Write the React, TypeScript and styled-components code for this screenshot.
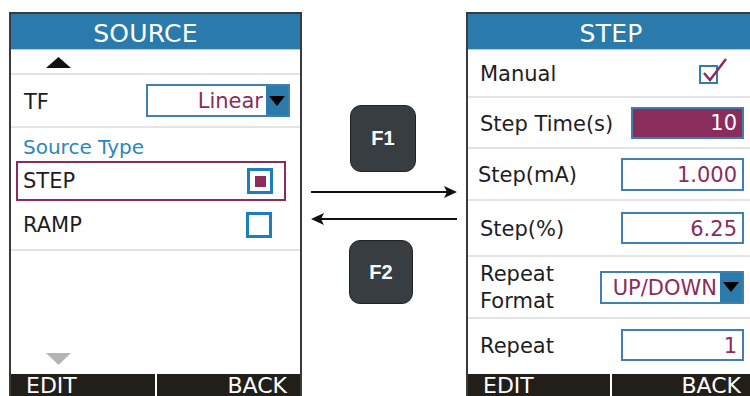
import React from 'react';
import styled, { createGlobalStyle } from 'styled-components';

const GlobalStyle = createGlobalStyle`
  html, body {
    margin: 0;
    padding: 0;
    background: #ffffff;
    overflow: hidden;
  }
  body {
    font-family: 'DejaVu Sans', Verdana, sans-serif;
  }
`;

const MAROON = '#8a2c5c';
const HEADER_BLUE = '#2a7aac';
const BOX_BLUE = '#3f80b0';
const CHECK_BLUE = '#1c7dc1';
const DIVIDER = '#e4e4e4';

const Stage = styled.div`
  display: flex;
  align-items: flex-start;
  width: 750px;
  height: 396px;
  padding: 12px 0 0 9px;
  box-sizing: border-box;
  overflow: hidden;
`;

const Panel = styled.div<{ $width: number }>`
  flex: none;
  display: flex;
  flex-direction: column;
  width: ${(p) => p.$width}px;
  height: 392px;
  box-sizing: border-box;
  border: 2px solid #3a3a3a;
  border-bottom: none;
  background: #ffffff;
`;

const Header = styled.div<{ $shift?: number }>`
  height: 36px;
  flex: none;
  display: flex;
  align-items: center;
  justify-content: center;
  padding: 3px ${(p) => p.$shift || 0}px 0 0;
  background: ${HEADER_BLUE};
  border-bottom: 1px solid #a9cfe6;
  box-sizing: border-box;
  color: #ffffff;
  font-size: 25px;
  letter-spacing: 0.2px;
`;

const Body = styled.div`
  flex: 1;
  display: flex;
  flex-direction: column;
`;

const Row = styled.div<{ $h: number; $divider?: boolean }>`
  flex: none;
  height: ${(p) => p.$h}px;
  box-sizing: border-box;
  display: flex;
  align-items: center;
  justify-content: space-between;
  padding: 0 10px 0 12px;
  border-bottom: ${(p) => (p.$divider ? `2px solid ${DIVIDER}` : 'none')};
  font-size: 21px;
  color: #1e1e1e;
`;

const Label = styled.span<{ $nudge?: number }>`
  margin-left: ${(p) => p.$nudge || 0}px;
  padding-top: 2px;
`;

const ArrowRow = styled.div<{ $top?: number; $bottom?: number }>`
  flex: none;
  padding: ${(p) => p.$top || 0}px 0 ${(p) => p.$bottom || 0}px 35px;
  line-height: 0;
`;

const UpRow = styled(ArrowRow)`
  height: 25px;
  box-sizing: border-box;
  border-bottom: 2px solid ${DIVIDER};
`;

const Spacer = styled.div`
  flex: 1;
`;

const SectionLabel = styled.div`
  height: 33px;
  box-sizing: border-box;
  padding: 5px 0 0 12px;
  display: flex;
  align-items: center;
  font-size: 20px;
  color: #2b87c2;
`;

const Option = styled.div<{ $selected?: boolean }>`
  flex: none;
  height: ${(p) => (p.$selected ? 40 : 50)}px;
  box-sizing: border-box;
  margin: ${(p) => (p.$selected ? '0 14px 0 5px' : '0')};
  padding: ${(p) => (p.$selected ? '0 11px 0 5px' : '0 28px 0 12px')};
  display: flex;
  align-items: center;
  justify-content: space-between;
  border: ${(p) => (p.$selected ? `2px solid ${MAROON}` : 'none')};
  border-bottom: 2px solid ${(p) => (p.$selected ? MAROON : DIVIDER)};
  font-size: 21px;
  color: #1e1e1e;
`;

const RadioBox = styled.div<{ $on?: boolean }>`
  width: 26px;
  height: 26px;
  box-sizing: border-box;
  border: 3px solid ${CHECK_BLUE};
  display: flex;
  align-items: center;
  justify-content: center;

  &::after {
    content: '';
    display: ${(p) => (p.$on ? 'block' : 'none')};
    width: 11px;
    height: 11px;
    background: ${MAROON};
  }
`;

const CheckWrap = styled.div`
  position: relative;
  width: 19px;
  height: 19px;
  margin: 3px 26px 0 0;
  box-sizing: border-box;
  border: 2px solid #2e7db5;
`;

const CheckMark = styled.svg`
  position: absolute;
  left: 2px;
  top: -8px;
  overflow: visible;
`;

const ValueBox = styled.div<{ $w: number; $h: number; $filled?: boolean }>`
  width: ${(p) => p.$w}px;
  height: ${(p) => p.$h}px;
  box-sizing: border-box;
  border: 2px solid ${BOX_BLUE};
  background: ${(p) => (p.$filled ? MAROON : '#ffffff')};
  color: ${(p) => (p.$filled ? '#ffffff' : MAROON)};
  display: flex;
  align-items: center;
  justify-content: flex-end;
  padding: 1px 5px 0 0;
  font-size: 21px;
`;

const Select = styled.div<{ $w: number }>`
  width: ${(p) => p.$w}px;
  height: 33px;
  box-sizing: border-box;
  border: 2px solid ${BOX_BLUE};
  display: flex;
  align-items: stretch;
  font-size: 21px;
  color: ${MAROON};
`;

const SelectText = styled.div`
  flex: 1;
  display: flex;
  align-items: center;
  justify-content: flex-end;
  padding: 1px 3px 0 0;
  white-space: nowrap;
`;

const SelectButton = styled.div`
  width: 22px;
  flex: none;
  background: ${HEADER_BLUE};
  display: flex;
  align-items: center;
  justify-content: center;
`;

const TwoLine = styled.div`
  line-height: 27px;
  font-size: 21px;
  padding-top: 2px;
`;

const SoftBar = styled.div`
  flex: none;
  height: 30px;
  display: flex;
  gap: 2px;
`;

const SoftKey = styled.div<{ $align: 'left' | 'right' }>`
  flex: 1;
  background: #221e1a;
  color: #ffffff;
  font-size: 22px;
  line-height: 22px;
  padding: 1px 13px 0 15px;
  text-align: ${(p) => p.$align};
`;

const Middle = styled.div`
  flex: none;
  width: 164px;
  display: flex;
  flex-direction: column;
  align-items: flex-start;
`;

const FKey = styled.div<{ $w: number; $h: number; $left: number; $top: number }>`
  width: ${(p) => p.$w}px;
  height: ${(p) => p.$h}px;
  margin: ${(p) => p.$top}px 0 0 ${(p) => p.$left}px;
  box-sizing: border-box;
  border: 1px solid #1f2326;
  border-radius: 11px;
  background: #383d42;
  color: #ffffff;
  display: flex;
  align-items: center;
  justify-content: center;
  font-family: 'Liberation Sans', Arial, sans-serif;
  font-weight: bold;
  font-size: 20px;
`;

const Arrows = styled.svg`
  margin: 8px 0 0 9px;
  display: block;
`;

const UpArrow = ({ color }: { color: string }) => (
  <svg width="25" height="11" viewBox="0 0 25 11">
    <polygon points="12.5,0 25,11 0,11" fill={color} />
  </svg>
);

const DownArrow = ({ color }: { color: string }) => (
  <svg width="25" height="12" viewBox="0 0 25 12">
    <polygon points="0,0 25,0 12.5,12" fill={color} />
  </svg>
);

const Caret = () => (
  <svg width="16" height="10" viewBox="0 0 16 10">
    <polygon points="0,0 16,0 8,10" fill="#000" />
  </svg>
);

const Dropdown = ({ value, width }: { value: string; width: number }) => (
  <Select $w={width}>
    <SelectText>{value}</SelectText>
    <SelectButton>
      <Caret />
    </SelectButton>
  </Select>
);

export default function App() {
  return (
    <>
      <GlobalStyle />
      <Stage>
        {/* Source menu */}
        <Panel $width={293}>
          <Header $shift={20}>SOURCE</Header>
          <Body>
            <UpRow $top={7}>
              <UpArrow color="#111" />
            </UpRow>
            <Row $h={53} $divider>
              <Label $nudge={1}>TF</Label>
              <Dropdown value="Linear" width={144} />
            </Row>
            <SectionLabel>Source Type</SectionLabel>
            <Option $selected>
              STEP
              <RadioBox $on />
            </Option>
            <Option>
              RAMP
              <RadioBox />
            </Option>
            <Spacer />
            <ArrowRow $bottom={9}>
              <DownArrow color="#b4b4b4" />
            </ArrowRow>
          </Body>
          <SoftBar>
            <SoftKey $align="left">EDIT</SoftKey>
            <SoftKey $align="right">BACK</SoftKey>
          </SoftBar>
        </Panel>

        {/* Function keys */}
        <Middle>
          <FKey $w={66} $h={67} $left={48} $top={93}>
            F1
          </FKey>
          <Arrows width="147" height="52" viewBox="0 0 147 52">
            <line x1="0" y1="12" x2="140" y2="12" stroke="#111" strokeWidth="2" />
            <polygon points="146,12 133,6 136,12 133,18" fill="#111" />
            <line x1="7" y1="39" x2="146" y2="39" stroke="#111" strokeWidth="2" />
            <polygon points="0,39 13,33 10,39 13,45" fill="#111" />
          </Arrows>
          <FKey $w={64} $h={64} $left={47} $top={8}>
            F2
          </FKey>
        </Middle>

        {/* Step settings */}
        <Panel $width={290}>
          <Header>STEP</Header>
          <Body>
            <Row $h={48} $divider>
              <Label>Manual</Label>
              <CheckWrap>
                <CheckMark width="24" height="22" viewBox="0 0 24 22">
                  <polyline
                    points="1,14 7,21 23,0"
                    fill="none"
                    stroke={MAROON}
                    strokeWidth="2.5"
                  />
                </CheckMark>
              </CheckWrap>
            </Row>
            <Row $h={51} $divider>
              <Label>Step Time(s)</Label>
              <ValueBox $w={113} $h={32} $filled>
                10
              </ValueBox>
            </Row>
            <Row $h={52} $divider>
              <Label $nudge={-2}>Step(mA)</Label>
              <ValueBox $w={123} $h={33}>
                1.000
              </ValueBox>
            </Row>
            <Row $h={56} $divider>
              <Label>Step(%)</Label>
              <ValueBox $w={123} $h={32}>
                6.25
              </ValueBox>
            </Row>
            <Row $h={62} $divider>
              <TwoLine>
                Repeat
                <br />
                Format
              </TwoLine>
              <Dropdown value="UP/DOWN" width={144} />
            </Row>
            <Row $h={52}>
              <Label>Repeat</Label>
              <ValueBox $w={123} $h={32}>
                1
              </ValueBox>
            </Row>
          </Body>
          <SoftBar>
            <SoftKey $align="left">EDIT</SoftKey>
            <SoftKey $align="right">BACK</SoftKey>
          </SoftBar>
        </Panel>
      </Stage>
    </>
  );
}
